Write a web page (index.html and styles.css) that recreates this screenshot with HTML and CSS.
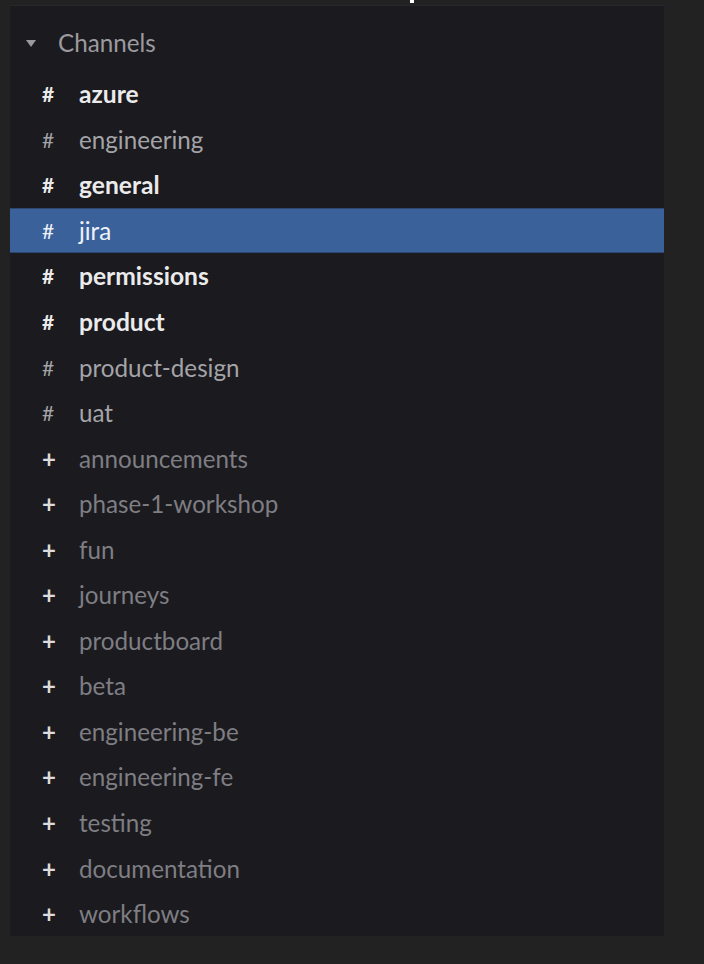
FILE: index.html
```
<!DOCTYPE html>
<html>
<head>
	<meta charset="utf-8">
	<title>Channels</title>
	<link rel="stylesheet" href="styles.css">
</head>
<body>

<div class="topbar"><span class="caret"></span></div>

<div class="sidebar">
	<div class="section-head">
		<span class="toggle"></span>
		<span class="section-title">Channels</span>
	</div>

	<ul class="channels">
		<li class="unread"><span class="sigil">#</span>azure</li>
		<li><span class="sigil">#</span>engineering</li>
		<li class="unread"><span class="sigil">#</span>general</li>
		<li class="active"><span class="sigil">#</span>jira</li>
		<li class="unread"><span class="sigil">#</span>permissions</li>
		<li class="unread"><span class="sigil">#</span>product</li>
		<li><span class="sigil">#</span>product-design</li>
		<li><span class="sigil">#</span>uat</li>
		<li class="join"><span class="sigil">+</span>announcements</li>
		<li class="join"><span class="sigil">+</span>phase-1-workshop</li>
		<li class="join"><span class="sigil">+</span>fun</li>
		<li class="join"><span class="sigil">+</span>journeys</li>
		<li class="join"><span class="sigil">+</span>productboard</li>
		<li class="join"><span class="sigil">+</span>beta</li>
		<li class="join"><span class="sigil">+</span>engineering-be</li>
		<li class="join"><span class="sigil">+</span>engineering-fe</li>
		<li class="join"><span class="sigil">+</span>testing</li>
		<li class="join"><span class="sigil">+</span>documentation</li>
		<li class="join"><span class="sigil">+</span>workflows</li>
	</ul>
</div>

</body>
</html>
```

FILE: styles.css
```
body {
	margin: 0;
	background: #232222;
	font-family: Lato, "Open Sans", sans-serif;
	color: #a4a4a8;
}

.topbar {
	height: 5px;
	padding-left: 410px;
}
.caret {
	display: block;
	width: 4px;
	height: 3px;
	background: #fff;
}

.sidebar {
	width: 654px;
	margin-left: 10px;
	background: #1b1a1f;
	border-top: 1px solid #28272b;
}

.section-head {
	display: flex;
	align-items: center;
	box-sizing: border-box;
	height: 66px;
	padding: 9px 0 0 16px;
	margin-top: -1px;
}
.toggle {
	width: 0;
	height: 0;
	border-left: 5px solid transparent;
	border-right: 5px solid transparent;
	border-top: 7px solid #9a9a9e;
	margin-right: 22px;
	margin-top: 1px;
}
.section-title {
	font-size: 24.2px;
	color: #9b9b9f;
}

.channels {
	list-style: none;
	margin: 0;
	padding: 0;
}
.channels li {
	display: flex;
	align-items: center;
	height: 45.55px;
	padding-left: 31px;
	font-size: 24.2px;
	color: #a4a4a8;
}
.sigil {
	width: 37px;
	padding-left: 1px;
	font-size: 21px;
	color: #a4a4a8;
}

.channels li.unread {
	font-weight: bold;
	font-size: 24.6px;
	color: #ebebeb;
}
.channels li.unread .sigil {
	color: #ebebeb;
}

.channels li.active {
	background: #3b619b;
	box-shadow: inset 0 1px 0 #2c4870, inset 0 -1px 0 #2c4870;
	color: #eef2f8;
}
.channels li.active .sigil {
	color: #eef2f8;
}

.channels li.join {
	color: #7e7e83;
}
.channels li.join .sigil {
	color: #dcdcdc;
	font-size: 24px;
	font-weight: bold;
}
```
